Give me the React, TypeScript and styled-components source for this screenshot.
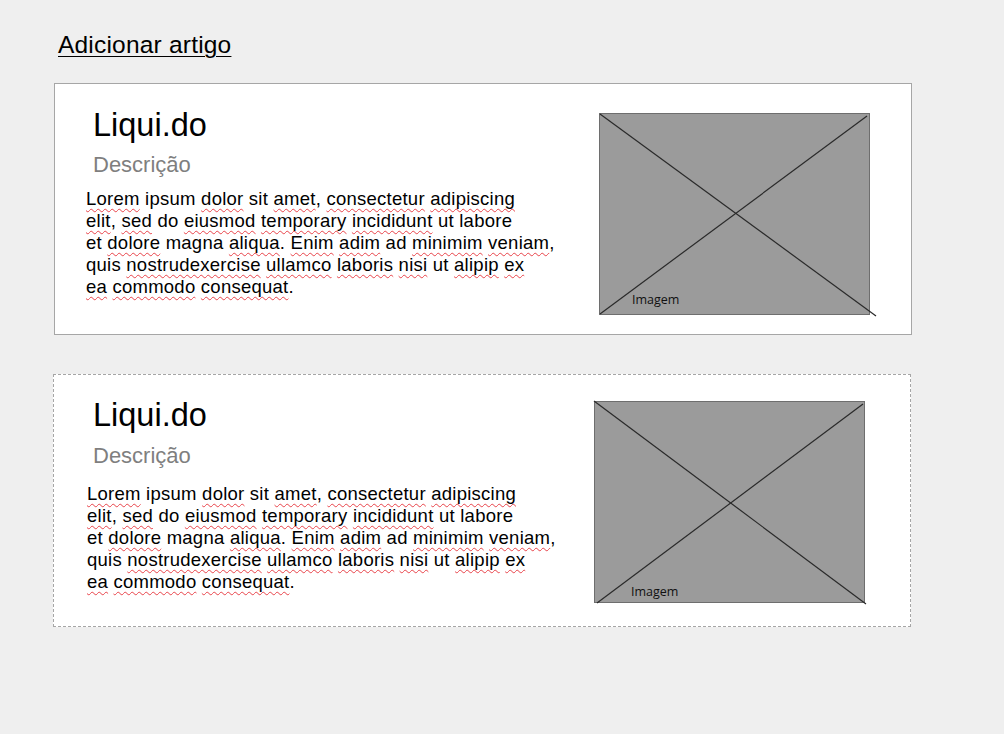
import React from "react";
import styled, { createGlobalStyle } from "styled-components";

const Global = createGlobalStyle`
  html, body { background: #efefef; }
  body {
    margin: 8px;
    font-family: "Liberation Sans", Arial, sans-serif;
    color: #000;
  }
`;

const Page = styled.main`
  display: flex;
  flex-direction: column;
  align-items: flex-start;
`;

const AddLink = styled.a`
  margin: 23px 0 0 50px;
  font-size: 24.5px;
  letter-spacing: 0.2px;
  line-height: 28px;
  color: #000;
  text-decoration: underline;
  text-decoration-thickness: 1px;
  text-underline-offset: 3px;
  cursor: pointer;
`;

const Card = styled.section<{ $left: number; $top: number; $height: number; $dashed?: boolean }>`
  box-sizing: border-box;
  width: 858px;
  height: ${(p) => p.$height}px;
  margin: ${(p) => p.$top}px 0 0 ${(p) => p.$left}px;
  background: #fff;
  border: 1px ${(p) => (p.$dashed ? "dashed" : "solid")} #a6a6a6;
  display: flex;
  justify-content: space-between;
  align-items: flex-start;
`;

const TextCol = styled.div<{ $pad: number; $top: number }>`
  padding: ${(p) => p.$top}px 0 0 ${(p) => p.$pad}px;
  display: flex;
  flex-direction: column;
  align-items: flex-start;
`;

const Title = styled.h2<{ $indent: number }>`
  margin: 0 0 0 ${(p) => p.$indent}px;
  font-size: 32.5px;
  line-height: 36px;
  font-weight: 400;
  color: #000;
`;

const Description = styled.h3<{ $indent: number; $gap: number }>`
  margin: ${(p) => p.$gap}px 0 0 ${(p) => p.$indent}px;
  font-size: 22px;
  line-height: 25px;
  font-weight: 400;
  color: #7f7f7f;
`;

const Body = styled.p<{ $gap: number }>`
  margin: ${(p) => p.$gap}px 0 0 0;
  font-size: 18.5px;
  letter-spacing: 0.25px;
  line-height: 22px;
  white-space: nowrap;
`;

const Misspelled = styled.span`
  text-decoration: underline wavy #e8434a;
  text-decoration-thickness: 1px;
  text-underline-offset: 3px;
  text-decoration-skip-ink: none;
`;

const ImageBox = styled.figure<{ $top: number; $right: number }>`
  position: relative;
  box-sizing: border-box;
  width: 271px;
  height: 202px;
  margin: ${(p) => p.$top}px ${(p) => p.$right}px 0 0;
  background: #9b9b9b;
  border: 1px solid #6e6e6e;
`;

const Cross = styled.svg`
  position: absolute;
  left: -1px;
  top: -1px;
  width: 271px;
  height: 202px;
  overflow: visible;
`;

const ImageLabel = styled.figcaption<{ $left: number; $bottom: number }>`
  position: absolute;
  left: ${(p) => p.$left}px;
  bottom: ${(p) => p.$bottom}px;
  font-family: "Open Sans", "Liberation Sans", sans-serif;
  font-size: 12.5px;
  line-height: 14px;
  color: #111;
`;

type Layout = {
  left: number;
  top: number;
  height: number;
  dashed?: boolean;
  pad: number;
  textTop: number;
  indent: number;
  descGap: number;
  bodyGap: number;
  imgTop: number;
  imgRight: number;
  labelLeft: number;
  labelBottom: number;
  lineA: [number, number, number, number];
  lineB: [number, number, number, number];
};

const M = ({ children }: { children: React.ReactNode }) => <Misspelled>{children}</Misspelled>;

const Lorem = () => (
  <>
    <M>Lorem</M> ipsum <M>dolor</M> sit <M>amet</M>, <M>consectetur</M> <M>adipiscing</M>
    <br />
    <M>elit</M>, <M>sed</M> do <M>eiusmod</M> <M>temporary</M> <M>incididunt</M> ut labore
    <br />
    et <M>dolore</M> magna <M>aliqua</M>. <M>Enim</M> <M>adim</M> ad <M>minimim</M> <M>veniam</M>,
    <br />
    quis <M>nostrudexercise</M> <M>ullamco</M> <M>laboris</M> <M>nisi</M> ut <M>alipip</M> <M>ex</M>
    <br />
    <M>ea</M> <M>commodo</M> <M>consequat</M>.
  </>
);

const ArticleCard = ({ l }: { l: Layout }) => (
  <Card $left={l.left} $top={l.top} $height={l.height} $dashed={l.dashed}>
    <TextCol $pad={l.pad} $top={l.textTop}>
      <Title $indent={l.indent}>Liqui.do</Title>
      <Description $indent={l.indent} $gap={l.descGap}>
        Descrição
      </Description>
      <Body $gap={l.bodyGap}>
        <Lorem />
      </Body>
    </TextCol>
    <ImageBox $top={l.imgTop} $right={l.imgRight}>
      <Cross viewBox="0 0 271 202">
        <line x1={l.lineA[0]} y1={l.lineA[1]} x2={l.lineA[2]} y2={l.lineA[3]} stroke="#2a2a2a" strokeWidth="1.2" />
        <line x1={l.lineB[0]} y1={l.lineB[1]} x2={l.lineB[2]} y2={l.lineB[3]} stroke="#2a2a2a" strokeWidth="1.2" />
      </Cross>
      <ImageLabel $left={l.labelLeft} $bottom={l.labelBottom}>
        Imagem
      </ImageLabel>
    </ImageBox>
  </Card>
);

const cards: Layout[] = [
  {
    left: 46,
    top: 24,
    height: 252,
    pad: 31,
    textTop: 23,
    indent: 7,
    descGap: 9,
    bodyGap: 11,
    imgTop: 29,
    imgRight: 41,
    labelLeft: 32,
    labelBottom: 7,
    lineA: [1, 1, 277, 203],
    lineB: [1, 201, 268, 3],
  },
  {
    left: 45,
    top: 39,
    height: 253,
    dashed: true,
    pad: 33,
    textTop: 22,
    indent: 6,
    descGap: 10,
    bodyGap: 15,
    imgTop: 26,
    imgRight: 45,
    labelLeft: 36,
    labelBottom: 3,
    lineA: [0, 0, 272, 203],
    lineB: [3, 202, 269, 3],
  },
];

export default function App() {
  return (
    <>
      <Global />
      <Page>
        <AddLink>Adicionar artigo</AddLink>
        {cards.map((c, i) => (
          <ArticleCard key={i} l={c} />
        ))}
      </Page>
    </>
  );
}
